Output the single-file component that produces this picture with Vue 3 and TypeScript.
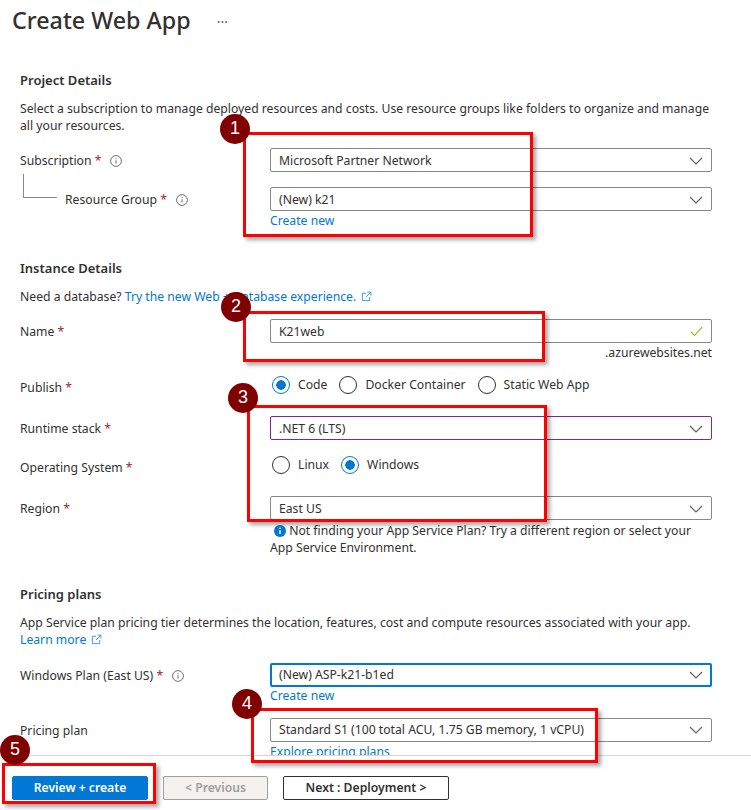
<script setup lang="ts">
const publishOptions = [
  { label: 'Code', checked: true },
  { label: 'Docker Container', checked: false },
  { label: 'Static Web App', checked: false },
]

const osOptions = [
  { label: 'Linux', checked: false },
  { label: 'Windows', checked: true },
]

const callouts = [
  { id: 1, cls: 'box-1' },
  { id: 2, cls: 'box-2' },
  { id: 3, cls: 'box-3' },
  { id: 4, cls: 'box-4' },
  { id: 5, cls: 'box-5' },
]
</script>

<template>
  <div class="page">
    <main class="content">
      <h1 class="title">Create Web App <span class="more">···</span></h1>

      <h2 class="section first">Project Details</h2>
      <p class="text desc">
        Select a subscription to manage deployed resources and costs. Use resource groups like folders to organize and manage all your resources.
      </p>

      <div class="row subscription-row">
        <div class="label"><span>Subscription <span class="req">*</span></span>
          <svg class="info" viewBox="0 0 12 12"><circle cx="6" cy="6" r="5.4" /><path d="M6 5.2v3.4M6 3.2v1" /></svg>
        </div>
        <div class="select"><span>Microsoft Partner Network</span>
          <svg class="chev" viewBox="0 0 14 8"><path d="M1 1l6 6 6-6" /></svg>
        </div>
      </div>

      <div class="row group-row">
        <div class="label nested">
          <span class="tree"></span>
          <span>Resource Group <span class="req">*</span></span>
          <svg class="info" viewBox="0 0 12 12"><circle cx="6" cy="6" r="5.4" /><path d="M6 5.2v3.4M6 3.2v1" /></svg>
        </div>
        <div class="select"><span>(New) k21</span>
          <svg class="chev" viewBox="0 0 14 8"><path d="M1 1l6 6 6-6" /></svg>
        </div>
      </div>
      <div class="row">
        <div></div>
        <a class="link under low">Create new</a>
      </div>

      <h2 class="section instance">Instance Details</h2>
      <p class="text desc instance-desc">
        Need a database? <a class="link">Try the new Web + Database experience.
          <svg class="ext" viewBox="0 0 12 12"><path d="M9.5 6.5v4h-8v-8h4M7 1.2h3.8V5M10.6 1.4L5.6 6.4" /></svg></a>
      </p>

      <div class="row name-row">
        <div class="label">Name <span class="req">*</span></div>
        <div class="select"><span>K21web</span>
          <svg class="check" viewBox="0 0 14 12"><path d="M1 6.5l3.8 4L13 1.2" /></svg>
        </div>
      </div>
      <div class="row">
        <div></div>
        <div class="suffix">.azurewebsites.net</div>
      </div>

      <div class="row publish-row">
        <div class="label offset">Publish <span class="req">*</span></div>
        <div class="radios">
          <span v-for="opt in publishOptions" :key="opt.label" class="radio-item">
            <span class="radio" :class="{ on: opt.checked }"></span>{{ opt.label }}
          </span>
        </div>
      </div>

      <div class="row runtime-row">
        <div class="label">Runtime stack <span class="req">*</span></div>
        <div class="select purple"><span>.NET 6 (LTS)</span>
          <svg class="chev" viewBox="0 0 14 8"><path d="M1 1l6 6 6-6" /></svg>
        </div>
      </div>

      <div class="row os-row">
        <div class="label offset">Operating System <span class="req">*</span></div>
        <div class="radios">
          <span v-for="opt in osOptions" :key="opt.label" class="radio-item">
            <span class="radio" :class="{ on: opt.checked }"></span>{{ opt.label }}
          </span>
        </div>
      </div>

      <div class="row region-row">
        <div class="label">Region <span class="req">*</span></div>
        <div class="select"><span>East US</span>
          <svg class="chev" viewBox="0 0 14 8"><path d="M1 1l6 6 6-6" /></svg>
        </div>
      </div>
      <div class="row">
        <div></div>
        <p class="text hint">
          <svg class="hint-icon" viewBox="0 0 12 12"><circle cx="6" cy="6" r="6" /><path d="M6 5.2v3.8M6 2.6v1.3" /></svg>
          Not finding your App Service Plan? Try a different region or select your App Service Environment.
        </p>
      </div>

      <h2 class="section pricing">Pricing plans</h2>
      <p class="text desc pricing-desc">
        App Service plan pricing tier determines the location, features, cost and compute resources associated with your app.
        <a class="link">Learn more
          <svg class="ext" viewBox="0 0 12 12"><path d="M9.5 6.5v4h-8v-8h4M7 1.2h3.8V5M10.6 1.4L5.6 6.4" /></svg></a>
      </p>

      <div class="row plan-row">
        <div class="label"><span>Windows Plan (East US) <span class="req">*</span></span>
          <svg class="info" viewBox="0 0 12 12"><circle cx="6" cy="6" r="5.4" /><path d="M6 5.2v3.4M6 3.2v1" /></svg>
        </div>
        <div class="select focused"><span>(New) ASP-k21-b1ed</span>
          <svg class="chev" viewBox="0 0 14 8"><path d="M1 1l6 6 6-6" /></svg>
        </div>
      </div>
      <div class="row">
        <div></div>
        <a class="link under">Create new</a>
      </div>

      <div class="row tier-row">
        <div class="label">Pricing plan</div>
        <div class="select"><span>Standard S1 (100 total ACU, 1.75 GB memory, 1 vCPU)</span>
          <svg class="chev" viewBox="0 0 14 8"><path d="M1 1l6 6 6-6" /></svg>
        </div>
      </div>
      <div class="row">
        <div></div>
        <a class="link under low">Explore pricing plans</a>
      </div>
    </main>

    <footer class="footer">
      <button class="btn primary">Review + create</button>
      <button class="btn disabled">&lt; Previous</button>
      <button class="btn next">Next : Deployment &gt;</button>
    </footer>

    <!-- red callouts pasted over the screenshot -->
    <template v-for="c in callouts" :key="c.id">
      <div class="box" :class="c.cls"></div>
      <div class="badge" :class="'badge-' + c.id">{{ c.id }}</div>
    </template>
  </div>
</template>

<style>
html,
body {
  margin: 0;
  background: #fff;
}
</style>

<style scoped>
.page {
  position: relative;
  width: 751px;
  height: 810px;
  overflow: hidden;
  display: flex;
  flex-direction: column;
  font-family: "Noto Sans", "Open Sans", sans-serif;
  font-size: 12.2px;
  color: #323130;
  background: #fff;
}

.content {
  height: 755px;
  flex: none;
  overflow: hidden;
  padding: 0 39px 0 20px;
  box-sizing: border-box;
}

.title {
  margin: 0 0 0 -8px;
  font-size: 23.3px;
  font-weight: 500;
  line-height: 40px;
  height: 40px;
  white-space: pre;
}

.more {
  font-size: 14px;
  font-weight: 400;
  color: #605e5c;
  margin-left: 20px;
  vertical-align: 2px;
}

.section {
  margin: 0;
  font-size: 13px;
  font-weight: 600;
  line-height: 18px;
}

.first {
  margin-top: 31px;
}

.instance {
  margin-top: 29px;
}

.pricing {
  margin-top: 29px;
}

.text {
  margin: 0;
  line-height: 17px;
}

.desc {
  margin-top: 11px;
}

.instance-desc {
  margin-top: 11px;
}

.pricing-desc {
  margin-top: 11px;
}

.row {
  display: grid;
  grid-template-columns: 250px 1fr;
  align-items: center;
  line-height: 18px;
}

.subscription-row {
  margin-top: 14px;
}

.group-row {
  margin-top: 15px;
}

.name-row {
  margin-top: 14px;
}

.publish-row {
  margin-top: 15px;
}

.runtime-row {
  margin-top: 22px;
}

.os-row {
  margin-top: 16px;
}

.region-row {
  margin-top: 22px;
}

.plan-row {
  margin-top: 15px;
}

.tier-row {
  margin-top: 13px;
}

.label {
  position: relative;
  top: 1px;
  display: flex;
  align-items: center;
  white-space: pre;
}

.offset {
  top: 3px;
}

.nested {
  padding-left: 45px;
}

.tree {
  position: absolute;
  left: 3px;
  top: -17px;
  width: 33px;
  height: 23px;
  border-left: 1px solid #8a8886;
  border-bottom: 1px solid #8a8886;
}

.req {
  color: #a4262c;
}

.info {
  width: 12px;
  height: 12px;
  margin-left: 9px;
  fill: none;
  stroke: #605e5c;
  stroke-width: 0.9;
}

.select {
  height: 24px;
  box-sizing: border-box;
  border: 1px solid #8a8886;
  border-radius: 2px;
  padding: 1px 8px 0;
  display: flex;
  align-items: center;
  justify-content: space-between;
  white-space: nowrap;
}

.purple {
  border-color: #7a2a96;
}

.focused {
  border: 2px solid #0078d4;
  padding: 0 7px;
}

.chev {
  width: 14px;
  height: 8px;
  fill: none;
  stroke: #605e5c;
  stroke-width: 1.1;
}

.check {
  width: 13px;
  height: 11px;
  fill: none;
  stroke: #7fba00;
  stroke-width: 1.1;
}

.link {
  color: #0078d4;
}

.under {
  display: block;
}

.low {
  padding-top: 1px;
}

.ext {
  width: 11px;
  height: 11px;
  margin-left: 2px;
  vertical-align: -1px;
  fill: none;
  stroke: #0078d4;
  stroke-width: 0.8;
}

.suffix {
  text-align: right;
  position: relative;
  top: 1px;
}

.radios {
  display: flex;
  gap: 12px;
  height: 18px;
  padding-left: 2px;
}

.radio-item {
  display: flex;
  align-items: center;
  gap: 8px;
}

.radio {
  width: 18px;
  height: 18px;
  box-sizing: border-box;
  border: 1px solid #323130;
  border-radius: 50%;
  background: #fff;
  flex: none;
}

.radio.on {
  border-color: #0078d4;
  background: radial-gradient(circle, #0078d4 0 4.5px, #fff 5px);
}

.hint {
  margin-top: 1.5px;
}

.hint-icon {
  width: 12px;
  height: 12px;
  margin-left: 4px;
  vertical-align: -2px;
  fill: #0078d4;
  stroke: #fff;
  stroke-width: 1.4;
}

.hint-icon circle {
  stroke: none;
}

.footer {
  flex: 1;
  border-top: 1px solid #d8d8d8;
  box-sizing: border-box;
  display: flex;
  gap: 15px;
  padding: 20px 0 0 12px;
}

.btn {
  height: 24px;
  box-sizing: border-box;
  border: 1px solid #323130;
  border-radius: 2px;
  background: #fff;
  color: #323130;
  font-family: inherit;
  font-size: 12.2px;
  font-weight: 600;
  padding: 0 0 2px;
}

.primary {
  width: 136px;
  background: #0078d4;
  border-color: #0078d4;
  color: #fff;
}

.disabled {
  width: 105px;
  background: #f3f2f1;
  border-color: #a19f9d;
  color: #a19f9d;
}

.next {
  width: 166px;
}

.box {
  position: absolute;
  box-sizing: border-box;
  border: 3px solid #f00;
  box-shadow: 3px 3px 4px rgba(0, 0, 0, 0.35);
}

.box-1 {
  left: 243px;
  top: 132px;
  width: 290px;
  height: 105px;
}

.box-2 {
  left: 243px;
  top: 311px;
  width: 302px;
  height: 51px;
}

.box-3 {
  left: 247px;
  top: 405px;
  width: 300px;
  height: 117px;
}

.box-4 {
  left: 251px;
  top: 708px;
  width: 347px;
  height: 55px;
}

.box-5 {
  left: 2px;
  top: 763px;
  width: 154px;
  height: 41px;
}

.badge {
  position: absolute;
  width: 30px;
  height: 30px;
  border-radius: 50%;
  background: #800000;
  color: #fff;
  font-family: "Liberation Sans", Arial, sans-serif;
  font-size: 18px;
  line-height: 28px;
  text-align: center;
}

.badge-1 {
  left: 220px;
  top: 114px;
}

.badge-2 {
  left: 221px;
  top: 292px;
}

.badge-3 {
  left: 228px;
  top: 383px;
}

.badge-4 {
  left: 232px;
  top: 689px;
}

.badge-5 {
  left: 0;
  top: 735px;
}
</style>
